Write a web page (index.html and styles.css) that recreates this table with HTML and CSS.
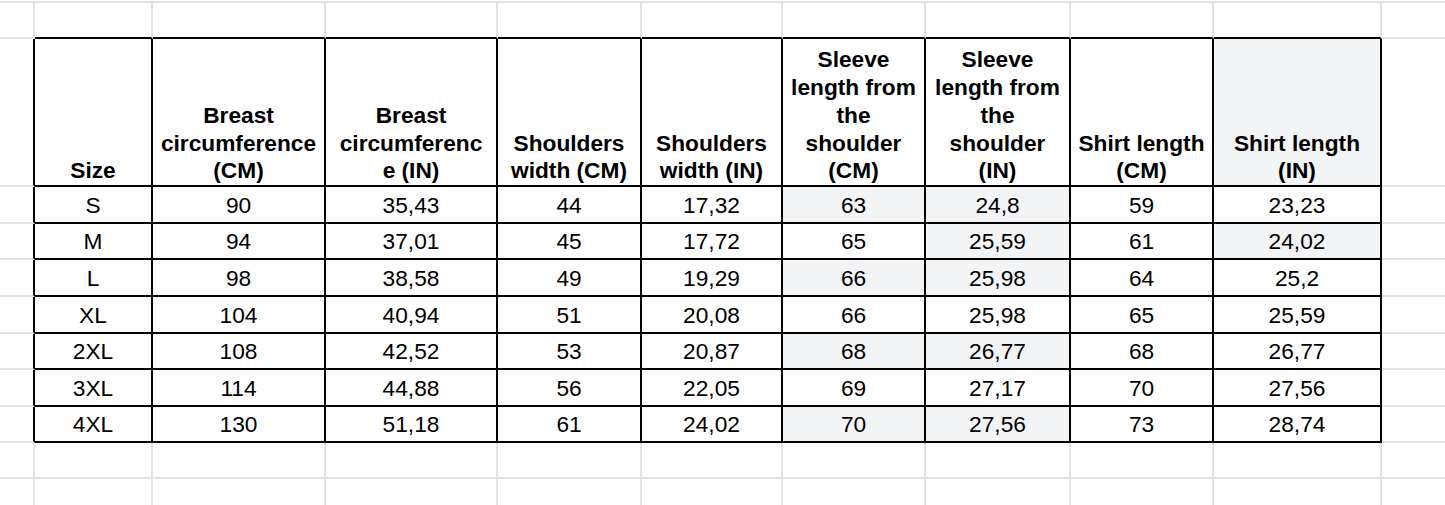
FILE: index.html
```html
<!DOCTYPE html>
<html lang="en">
<head>
<meta charset="utf-8">
<title>Size chart</title>
<link rel="stylesheet" href="styles.css">
</head>
<body>
<table class="sheet">
  <colgroup>
    <col class="c0"><col class="c1"><col class="c2"><col class="c3"><col class="c4"><col class="c5"><col class="c6"><col class="c7"><col class="c8"><col class="c9"><col class="c10">
  </colgroup>
  <tr class="r-top">
    <td class="first"></td><td class="above"></td><td class="above"></td><td class="above"></td><td class="above"></td><td class="above"></td><td class="above"></td><td class="above"></td><td class="above"></td><td class="above"></td><td></td>
  </tr>
  <tr class="r-head">
    <td class="lead"></td>
    <th>Size</th>
    <th>Breast<br>circumference<br>(CM)</th>
    <th>Breast<br>circumferenc<br>e (IN)</th>
    <th>Shoulders<br>width (CM)</th>
    <th>Shoulders<br>width (IN)</th>
    <th>Sleeve<br>length from<br>the<br>shoulder<br>(CM)</th>
    <th>Sleeve<br>length from<br>the<br>shoulder<br>(IN)</th>
    <th>Shirt length<br>(CM)</th>
    <th class="tint">Shirt length<br>(IN)</th>
    <td></td>
  </tr>
  <tr class="r-a">
    <td class="lead"></td><td class="d">S</td><td class="d">90</td><td class="d">35,43</td><td class="d">44</td><td class="d">17,32</td><td class="d tint">63</td><td class="d tint">24,8</td><td class="d">59</td><td class="d">23,23</td><td></td>
  </tr>
  <tr class="r-b">
    <td class="lead"></td><td class="d">M</td><td class="d">94</td><td class="d">37,01</td><td class="d">45</td><td class="d">17,72</td><td class="d">65</td><td class="d tint">25,59</td><td class="d">61</td><td class="d tint">24,02</td><td></td>
  </tr>
  <tr class="r-a">
    <td class="lead"></td><td class="d">L</td><td class="d">98</td><td class="d">38,58</td><td class="d">49</td><td class="d">19,29</td><td class="d tint">66</td><td class="d tint">25,98</td><td class="d">64</td><td class="d">25,2</td><td></td>
  </tr>
  <tr class="r-a">
    <td class="lead"></td><td class="d">XL</td><td class="d">104</td><td class="d">40,94</td><td class="d">51</td><td class="d">20,08</td><td class="d">66</td><td class="d">25,98</td><td class="d">65</td><td class="d">25,59</td><td></td>
  </tr>
  <tr class="r-b">
    <td class="lead"></td><td class="d">2XL</td><td class="d">108</td><td class="d">42,52</td><td class="d">53</td><td class="d">20,87</td><td class="d tint">68</td><td class="d tint">26,77</td><td class="d">68</td><td class="d">26,77</td><td></td>
  </tr>
  <tr class="r-a">
    <td class="lead"></td><td class="d">3XL</td><td class="d">114</td><td class="d">44,88</td><td class="d">56</td><td class="d">22,05</td><td class="d">69</td><td class="d">27,17</td><td class="d">70</td><td class="d">27,56</td><td></td>
  </tr>
  <tr class="r-b">
    <td class="lead"></td><td class="d">4XL</td><td class="d">130</td><td class="d">51,18</td><td class="d">61</td><td class="d">24,02</td><td class="d tint">70</td><td class="d tint">27,56</td><td class="d">73</td><td class="d">28,74</td><td></td>
  </tr>
  <tr class="r-empty">
    <td></td><td></td><td></td><td></td><td></td><td></td><td></td><td></td><td></td><td></td><td></td>
  </tr>
  <tr class="r-empty">
    <td></td><td></td><td></td><td></td><td></td><td></td><td></td><td></td><td></td><td></td><td></td>
  </tr>
</table>
</body>
</html>
```

FILE: styles.css
```css
html, body {
  margin: 0;
  padding: 0;
  background: #ffffff;
  overflow: hidden;
}

body {
  font-family: "Liberation Sans", Arial, sans-serif;
  color: #000000;
}

.sheet {
  margin-top: 1px;
  border-collapse: separate;
  border-spacing: 0;
  table-layout: fixed;
  width: 1502px;
}

.c0 { width: 35px; }
.c1 { width: 118px; }
.c2 { width: 173px; }
.c3 { width: 172px; }
.c4 { width: 144px; }
.c5 { width: 141px; }
.c6 { width: 143px; }
.c7 { width: 145px; }
.c8 { width: 143px; }
.c9 { width: 168px; }
.c10 { width: 120px; }

.sheet td,
.sheet th {
  box-sizing: border-box;
  padding: 0 2px 2px;
  border-right: 2px solid #e2e2e2;
  border-bottom: 2px solid #e2e2e2;
  font-size: 22.7px;
  line-height: 27.7px;
  text-align: center;
  vertical-align: bottom;
  white-space: nowrap;
  overflow: hidden;
}

.r-top td {
  border-top: 2px solid #e2e2e2;
  height: 38px;
}

.r-top td.above {
  border-bottom-color: #000000;
}

.r-head th {
  font-weight: 700;
  padding-bottom: 0;
  border-right-color: #000000;
  border-bottom-color: #000000;
  height: 148px;
}

.r-head td, .r-a td, .r-b td {
  height: 37px;
}

.r-b td {
  height: 36px;
}

.r-empty td {
  height: 36px;
}

.sheet td.lead {
  border-right-color: #000000;
}

.sheet td.d {
  border-right-color: #000000;
  border-bottom-color: #000000;
}

.sheet .tint {
  background: #f3f4f6;
}
```
